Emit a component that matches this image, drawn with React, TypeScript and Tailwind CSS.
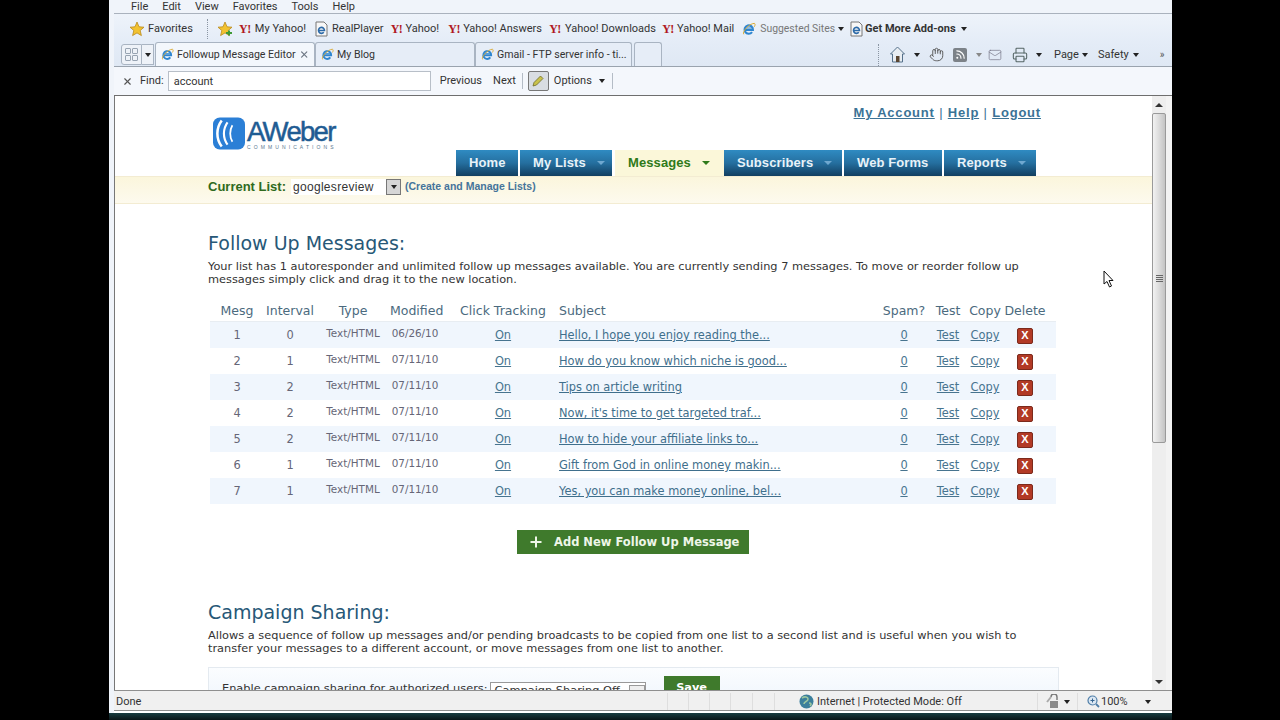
import React from "react";
import { Hand, Mail, Printer, Rss, X } from "lucide-react";

const rowGrid = "grid grid-cols-[54px_52px_74px_50px_119px_321px_48px_40px_34px_46px_8px] items-center";

const messages = [
  { n: 1, interval: 0, date: "06/26/10", subject: "Hello, I hope you enjoy reading the..." },
  { n: 2, interval: 1, date: "07/11/10", subject: "How do you know which niche is good..." },
  { n: 3, interval: 2, date: "07/11/10", subject: "Tips on article writing" },
  { n: 4, interval: 2, date: "07/11/10", subject: "Now, it's time to get targeted traf..." },
  { n: 5, interval: 2, date: "07/11/10", subject: "How to hide your affiliate links to..." },
  { n: 6, interval: 1, date: "07/11/10", subject: "Gift from God in online money makin..." },
  { n: 7, interval: 1, date: "07/11/10", subject: "Yes, you can make money online, bel..." },
];

function Caret({ className = "border-t-[#222]" }: { className?: string }) {
  return <span className={"inline-block h-0 w-0 border-x-[3px] border-t-[4px] border-x-transparent " + className} />;
}

function IeIcon({ size = 14 }: { size?: number }) {
  return (
    <svg width={size} height={size} viewBox="0 0 16 16" className="shrink-0">
      <path d="M3.5 9 H12.5 A4.8 4.8 0 1 0 11.5 11.6" fill="none" stroke="#2f86d0" strokeWidth="2.4" />
      <path d="M5 6.8 H11" stroke="#2f86d0" strokeWidth="1" />
      <path d="M2 14 C0 11 8 2 14 1.5 C15.5 2 15 4 14 5.5" fill="none" stroke="#d9a92e" strokeWidth="1.1" />
    </svg>
  );
}

function PageIcon() {
  return (
    <svg width="13" height="16" viewBox="0 0 13 16" className="shrink-0">
      <path d="M1 1 H9 L12 4 V15 H1 Z" fill="#f7f7f7" stroke="#777" strokeWidth="1" />
      <path d="M3.5 9.5 H9.5 A3 3 0 1 0 8.8 11.3" fill="none" stroke="#2c6aa8" strokeWidth="1.6" />
    </svg>
  );
}

function StarIcon({ plus }: { plus?: boolean }) {
  return (
    <svg width="16" height="16" viewBox="0 0 16 16" className="shrink-0">
      <path d="M8 1 L10 5.8 L15 6.2 L11.2 9.5 L12.4 14.6 L8 11.9 L3.6 14.6 L4.8 9.5 L1 6.2 L6 5.8 Z" fill="#f2c230" stroke="#b98a1e" strokeWidth="0.8" />
      {plus && <path d="M9 12 H15 M12 9.5 V14.5" stroke="#3f9a35" strokeWidth="2" />}
    </svg>
  );
}

function YahooMark() {
  return <span className="inline-block w-[14px] text-center font-['Liberation_Serif',serif] text-[12px] font-bold leading-none tracking-[-0.5px] text-[#b01822]">Y!</span>;
}

function HomeIcon() {
  return (
    <svg width="15" height="17" viewBox="0 0 15 17">
      <path d="M7.5 1 L14.5 8 H12.5 V16 H2.5 V8 H0.5 Z" fill="#e8edf2" stroke="#55708a" strokeWidth="1" />
      <rect x="6" y="10" width="3.5" height="6" fill="#5a4632" />
    </svg>
  );
}

function Tab({ active, title, className }: { active?: boolean; title: string; className: string }) {
  return (
    <div className={"flex h-[24px] items-center gap-[3px] rounded-t-[3px] border border-b-0 border-[#a9b4c2] pl-[5px] " + className + (active ? " bg-[#f3f7fc]" : " bg-[#e6edf7]")}>
      <IeIcon size={13} />
      <span className="flex-1 whitespace-nowrap pt-[1px] text-[10.6px] leading-[14px] text-[#333]">{title}</span>
      {active && <X size={11} strokeWidth={2.5} className="mr-[5px] text-[#6a7480]" />}
    </div>
  );
}

function NavTab({ label, menu, active, className }: { label: string; menu?: boolean; active?: boolean; className: string }) {
  return (
    <div
      className={
        "flex h-[26px] items-center gap-[11px] pl-[13px] text-[13px] font-bold tracking-[0.1px] " +
        className +
        (active
          ? " bg-[#fbf7d9] text-[#2f7a1a]"
          : " bg-gradient-to-b from-[#2f8bc2] via-[#256f9f] to-[#123f61] text-[#e8f2f8]")
      }
    >
      <span>{label}</span>
      {menu && (
        <span className={"inline-block h-0 w-0 border-x-[4px] border-t-[4px] border-x-transparent " + (active ? "border-t-[#2f7a1a]" : "border-t-[#6fa8d0]")} />
      )}
    </div>
  );
}

function DeleteBox() {
  return (
    <div className="flex h-[16px] w-[16px] items-center justify-center rounded-[2px] border border-[#7c2a1c] bg-[#b23a26] font-['Liberation_Sans',sans-serif] text-[11px] font-bold leading-none text-white">
      X
    </div>
  );
}

function Toolbars() {
  return (
    <div className="bg-[#edf2f9] text-[11px] leading-[14px] text-[#333]">
      <div className="flex h-[14px] items-start gap-[14px] border-b border-[#aab2bd] bg-[#f0f4fa] pl-[17px]">
        <span>File</span>
        <span>Edit</span>
        <span>View</span>
        <span>Favorites</span>
        <span>Tools</span>
        <span>Help</span>
      </div>

      <div className="flex h-[29px] items-center bg-gradient-to-b from-[#eef3fa] to-[#e4ecf7] pl-[15px]">
        <StarIcon />
        <span className="ml-[3px]">Favorites</span>
        <span className="ml-[14px] h-[20px] border-l border-dotted border-[#8a95a3]" />
        <span className="ml-[9px]"><StarIcon plus /></span>
        <span className="ml-[5px] flex"><YahooMark /></span>
        <span className="ml-[3px]">My Yahoo!</span>
        <span className="ml-[9px]"><PageIcon /></span>
        <span className="ml-[4px]">RealPlayer</span>
        <span className="ml-[6px] flex"><YahooMark /></span>
        <span className="ml-[2px]">Yahoo!</span>
        <span className="ml-[8px] flex"><YahooMark /></span>
        <span className="ml-[2px]">Yahoo! Answers</span>
        <span className="ml-[6px] flex"><YahooMark /></span>
        <span className="ml-[3px]">Yahoo! Downloads</span>
        <span className="ml-[5px] flex"><YahooMark /></span>
        <span className="ml-[2px]">Yahoo! Mail</span>
        <span className="ml-[8px]"><IeIcon /></span>
        <span className="ml-[4px] text-[10.4px] text-[#777]">Suggested Sites</span>
        <span className="ml-[3px] flex"><Caret /></span>
        <span className="ml-[6px]"><PageIcon /></span>
        <span className="ml-[2px] font-bold">Get More Add-ons</span>
        <span className="ml-[5px] flex"><Caret /></span>
      </div>

      <div className="flex h-[24px] items-end border-b border-[#9aa3ae] bg-gradient-to-b from-[#e4ecf7] to-[#dfe8f4] pl-[7px]">
        <div className="mb-[1px] flex h-[21px] w-[21px] items-center justify-center rounded-l-[3px] border border-[#a9b4c2] bg-[#eef2f8]">
          <div className="grid grid-cols-2 gap-[1px]">
            <span className="h-[6px] w-[6px] rounded-[1px] border border-[#98a4b2]" />
            <span className="h-[6px] w-[6px] rounded-[1px] border border-[#98a4b2]" />
            <span className="h-[6px] w-[6px] rounded-[1px] border border-[#98a4b2]" />
            <span className="h-[6px] w-[6px] rounded-[1px] border border-[#98a4b2]" />
          </div>
        </div>
        <div className="mb-[1px] flex h-[21px] w-[12px] items-center justify-center border-y border-r border-[#a9b4c2] bg-[#eef2f8]">
          <Caret />
        </div>
        <Tab active title="Followup Message Editor" className="ml-[1px] w-[160px]" />
        <Tab title="My Blog" className="w-[160px]" />
        <Tab title="Gmail - FTP server info - ti..." className="w-[157px]" />
        <div className="ml-[2px] h-[24px] w-[28px] rounded-t-[3px] border border-b-0 border-[#a9b4c2] bg-[#e6edf7]" />
        <span className="ml-[216px] h-[22px] border-l border-dotted border-[#8a95a3]" />
        <div className="flex h-[23px] items-center text-[#333]">
          <span className="ml-[11px]"><HomeIcon /></span>
          <span className="ml-[9px] flex"><Caret /></span>
          <Hand size={15} strokeWidth={1.5} className="ml-[9px] text-[#555]" />
          <span className="ml-[9px] flex h-[14px] w-[14px] items-center justify-center rounded-[2px] bg-[#7c8288]">
            <Rss size={11} strokeWidth={2.5} className="text-white" />
          </span>
          <span className="ml-[9px] flex"><Caret className="border-t-[#888]" /></span>
          <Mail size={14} strokeWidth={1.2} className="ml-[6px] text-[#778]" />
          <Printer size={16} strokeWidth={1.6} className="ml-[10px] text-[#566]" />
          <span className="ml-[8px] flex"><Caret /></span>
          <span className="ml-[12px]">Page</span>
          <span className="ml-[3px] flex"><Caret /></span>
          <span className="ml-[10px]">Safety</span>
          <span className="ml-[4px] flex"><Caret /></span>
          <span className="ml-[21px] text-[10px] text-[#555]">»</span>
        </div>
      </div>

      <div className="flex h-[28px] items-center bg-[#f4f7fc] pl-[8px]">
        <X size={11} strokeWidth={2.5} className="text-[#555]" />
        <span className="ml-[7px]">Find:</span>
        <div className="ml-[4px] flex h-[20px] w-[263px] items-center border border-[#b8bfc8] bg-white pl-[5px] pt-[1px] text-[11px]">account</div>
        <span className="ml-[9px]">Previous</span>
        <span className="ml-[11px]">Next</span>
        <span className="ml-[6px] h-[16px] border-l border-[#b4bcc6]" />
        <span className="ml-[5px] flex h-[20px] w-[21px] items-center justify-center rounded-[2px] border border-[#777] bg-[#d9dde2]">
          <svg width="14" height="14" viewBox="0 0 14 14">
            <path d="M2 12 L3 8.5 L9.5 2 L12 4.5 L5.5 11 Z" fill="#c9c24a" stroke="#6d6a28" strokeWidth="0.8" />
          </svg>
        </span>
        <span className="ml-[5px]">Options</span>
        <span className="ml-[7px] flex"><Caret /></span>
        <span className="ml-[7px] h-[16px] border-l border-[#b4bcc6]" />
      </div>
    </div>
  );
}

function Logo() {
  return (
    <div className="flex items-start">
      <svg width="32" height="33" viewBox="0 0 33 33" className="shrink-0">
        <rect x="0" y="0" width="33" height="33" rx="7" fill="#2b7fd6" />
        <path d="M9 3 C3 11 3 22 9 30" fill="none" stroke="#fff" strokeWidth="2.6" />
        <path d="M15 5 C10 12 10 21 15 28" fill="none" stroke="#fff" strokeWidth="2.2" />
        <path d="M20 8 C17 13 17 20 20 25" fill="none" stroke="#fff" strokeWidth="1.8" />
      </svg>
      <div className="ml-[2px] mt-[2px] font-['Liberation_Sans',sans-serif]">
        <div className="text-[27.5px] font-normal leading-[25px] tracking-[-1.7px] text-[#1f5c93] [-webkit-text-stroke:0.5px_#1f5c93]">AWeber</div>
        <div className="text-[5px] leading-[6px] tracking-[3.1px] text-[#5a7890]">COMMUNICATIONS</div>
      </div>
    </div>
  );
}

function Page() {
  return (
    <div className="flex h-[594px] min-w-0 flex-1 flex-col overflow-hidden bg-white font-['DejaVu_Sans',sans-serif]">
      <div className="flex h-[80px] shrink-0 pl-[98px] font-['Liberation_Sans',sans-serif]">
        <div className="mt-[21px] w-[124px]"><Logo /></div>
        <div className="ml-[119px] flex w-[585px] flex-col justify-between">
          <div className="mt-[9px] self-end text-[13px] font-bold leading-[16px] tracking-[0.8px] text-[#3b7396]">
            <span className="underline">My Account</span>
            <span className="font-normal"> | </span>
            <span className="underline">Help</span>
            <span className="font-normal"> | </span>
            <span className="underline">Logout</span>
          </div>
          <div className="flex">
            <NavTab label="Home" className="w-[62px]" />
            <NavTab label="My Lists" menu className="ml-[2px] w-[92px]" />
            <NavTab label="Messages" menu active className="ml-[3px] w-[109px]" />
            <NavTab label="Subscribers" menu className="w-[118px]" />
            <NavTab label="Web Forms" className="ml-[2px] w-[98px]" />
            <NavTab label="Reports" menu className="ml-[2px] w-[92px]" />
          </div>
        </div>
      </div>

      <div className="flex h-[28px] shrink-0 items-center border-y border-[#f3ecd2] bg-gradient-to-b from-[#fbf6dc] to-[#fdfaee] pb-[6px] pl-[93px] font-['Liberation_Sans',sans-serif]">
        <span className="text-[13px] font-bold text-[#2f6a1c]">Current List:</span>
        <div className="ml-[5px] flex h-[16px] w-[110px] items-center justify-between bg-white pl-[2px] text-[12px] tracking-[0.3px] text-[#333]">
          googlesreview
          <span className="flex h-[16px] w-[15px] items-center justify-center border border-[#777] bg-[#d6d6d6]">
            <Caret />
          </span>
        </div>
        <span className="ml-[4px] text-[10.5px] font-bold text-[#45749a]">(Create and Manage Lists)</span>
      </div>

      <div className="pl-[93px] pr-[92px]">
        <h1 className="mt-[27px] text-[19px] leading-[24px] text-[#275877]">Follow Up Messages:</h1>
        <p className="mt-[5px] w-[830px] text-[11.35px] leading-[13px] text-[#333]">
          Your list has 1 autoresponder and unlimited follow up messages available. You are currently sending 7 messages. To move or reorder follow up messages simply click and drag it to the new location.
        </p>
      </div>

      <div className="ml-[95px] mt-[15px] w-[846px]">
        <div className={rowGrid + " h-[21px] border-b border-[#e8edf2] text-center text-[12.5px] leading-none text-[#4b6a7e]"}>
          <span>Mesg</span>
          <span>Interval</span>
          <span>Type</span>
          <span>Modified</span>
          <span className="pl-[7px]">Click Tracking</span>
          <span className="text-left">Subject</span>
          <span>Spam?</span>
          <span>Test</span>
          <span>Copy</span>
          <span>Delete</span>
          <span />
        </div>
        {messages.map((m) => (
          <div key={m.n} className={rowGrid + " h-[26px] text-center text-[11.4px] leading-[14px] text-[#667] " + (m.n % 2 === 1 ? "bg-[#f0f6fd]" : "bg-white")}>
            <span>{m.n}</span>
            <span>{m.interval}</span>
            <span className="mb-[4px] whitespace-nowrap text-[10.4px]">Text/HTML</span>
            <span className="mb-[4px] text-[10.4px]">{m.date}</span>
            <span className="pl-[7px] text-[#47748f] underline">On</span>
            <span className="whitespace-nowrap text-left text-[#3f6f8c] underline">{m.subject}</span>
            <span className="text-[#47748f] underline">0</span>
            <span className="text-[#47748f] underline">Test</span>
            <span className="text-[#47748f] underline">Copy</span>
            <span className="flex justify-center pt-[1px]"><DeleteBox /></span>
            <span />
          </div>
        ))}
      </div>

      <div className="ml-[402px] mt-[26px] flex h-[24px] w-[232px] shrink-0 items-center bg-[#3f7a2c] text-[11.5px] font-bold leading-none text-[#eef6e8]">
        <svg width="12" height="12" viewBox="0 0 12 12" className="ml-[13px]">
          <path d="M6 0.5 V11.5 M0.5 6 H11.5" stroke="#eef6e8" strokeWidth="2" />
        </svg>
        <span className="ml-[12px] whitespace-nowrap pt-[2px]">Add New Follow Up Message</span>
      </div>

      <div className="pl-[93px]">
        <h2 className="mt-[46px] text-[19px] leading-[24px] text-[#275877]">Campaign Sharing:</h2>
        <p className="mt-[5px] w-[830px] text-[11.35px] leading-[13px] text-[#333]">
          Allows a sequence of follow up messages and/or pending broadcasts to be copied from one list to a second list and is useful when you wish to transfer your messages to a different account, or move messages from one list to another.
        </p>
      </div>

      <div className="ml-[93px] mt-[12px] flex h-[40px] w-[851px] shrink-0 items-start border border-[#e4eaf0] bg-gradient-to-b from-[#fbfdff] to-[#eef5fc] pl-[13px] text-[11.35px] leading-none text-[#333]">
        <span className="mt-[15px]">Enable campaign sharing for authorized users:</span>
        <div className="ml-[2px] mt-[14px] flex h-[20px] w-[156px] items-start justify-between border border-[#999] bg-white pl-[4px] pt-[2px]">
          <span className="whitespace-nowrap">Campaign Sharing Off</span>
          <span className="h-[18px] w-[16px] shrink-0 border border-[#999] bg-[#eee]" />
        </div>
        <div className="ml-[18px] mt-[8px] flex h-[24px] w-[56px] items-center justify-center bg-[#3f7a2c] font-bold text-white">Save</div>
      </div>
    </div>
  );
}

function Scrollbar() {
  return (
    <div className="flex h-[594px] w-[14px] shrink-0 flex-col bg-[#eeeeee]">
      <div className="flex h-[17px] items-center justify-center">
        <span className="inline-block h-0 w-0 border-x-[4px] border-b-[4px] border-x-transparent border-b-[#333]" />
      </div>
      <div className="flex h-[330px] items-center justify-center rounded-[2px] border border-[#9a9a9a] bg-gradient-to-r from-[#f2f2f2] via-[#dcdcdc] to-[#c4c4c4]">
        <div className="flex flex-col gap-[1px]">
          <span className="h-[1px] w-[7px] bg-[#666]" />
          <span className="h-[1px] w-[7px] bg-[#666]" />
          <span className="h-[1px] w-[7px] bg-[#666]" />
          <span className="h-[1px] w-[7px] bg-[#666]" />
        </div>
      </div>
      <div className="flex-1" />
      <div className="flex h-[17px] items-center justify-center">
        <span className="inline-block h-0 w-0 border-x-[4px] border-t-[4px] border-x-transparent border-t-[#333]" />
      </div>
    </div>
  );
}

function StatusBar() {
  return (
    <div className="flex h-[21px] items-center border-y border-[#8f8f8f] bg-[#f0f0f0] pl-[2px] pt-[2px] text-[11px] leading-none text-[#333]">
      <span className="w-[551px]">Done</span>
      <span className="h-full w-[21px] border-l border-[#dedede]" />
      <span className="h-full w-[21px] border-l border-[#dedede]" />
      <span className="h-full w-[21px] border-l border-[#dedede]" />
      <span className="h-full w-[22px] border-l border-[#dedede]" />
      <span className="h-full w-[22px] border-l border-[#dedede]" />
      <span className="flex h-full w-[263px] items-center border-l border-[#dedede] pl-[25px]">
        <svg width="15" height="15" viewBox="0 0 15 15" className="-ml-[1px] mr-[3px] shrink-0">
          <circle cx="7.5" cy="7.5" r="7" fill="#3c7f9c" />
          <path d="M3 4 C6 2 9 3 9 5 C9 8 5 7 5 10 M10 9 C12 9 13 10 11 12" fill="none" stroke="#9cc7a0" strokeWidth="1.6" />
        </svg>
        Internet | Protected Mode: Off
      </span>
      <span className="flex h-full w-[40px] items-center border-l border-[#dedede] pl-[8px]">
        <svg width="14" height="15" viewBox="0 0 14 15" className="shrink-0">
          <path d="M5 3 A3 3 0 0 1 11 3 V6" fill="none" stroke="#777" strokeWidth="1.4" />
          <rect x="4" y="7" width="8" height="7" fill="#8a8a8a" />
          <path d="M1 8 L5 3" stroke="#aaa" strokeWidth="2" />
        </svg>
        <span className="ml-[4px] flex"><Caret /></span>
      </span>
      <span className="flex h-full flex-1 items-center border-l border-[#dedede] pl-[9px]">
        <svg width="13" height="13" viewBox="0 0 13 13" className="shrink-0">
          <circle cx="5.5" cy="5.5" r="4.5" fill="#dbe7f3" stroke="#4f7ea8" strokeWidth="1.2" />
          <path d="M3.5 5.5 H7.5 M5.5 3.5 V7.5" stroke="#35648f" strokeWidth="1" />
          <path d="M9 9 L12 12" stroke="#4f7ea8" strokeWidth="1.8" />
        </svg>
        <span className="ml-[1px]">100%</span>
        <span className="ml-[17px] flex"><Caret /></span>
      </span>
    </div>
  );
}

export default function App() {
  return (
    <div className="relative flex h-[720px] w-[1280px] overflow-hidden bg-black font-['Roboto',sans-serif]">
      <div className="ml-[109px] flex h-[720px] w-[1063px] shrink-0 flex-col">
        <div className="flex h-[713px] shrink-0 flex-col bg-[#f0f4fa] pl-[5px]">
          <Toolbars />
          <div className="h-[1px] shrink-0 bg-[#6e6e6e]" />
          <div className="flex">
            <div className="w-[1px] shrink-0 bg-[#777]" />
            <Page />
            <Scrollbar />
            <div className="w-[6px] shrink-0 bg-[#f3f3f3]" />
          </div>
          <StatusBar />
          <div className="h-[2px] bg-white" />
        </div>
        <div className="h-[7px] bg-gradient-to-b from-[#173c40] to-[#0a1618]" />
      </div>

      {/* mouse pointer sitting over the page */}
      <svg width="12" height="18" viewBox="0 0 12 18" className="absolute left-[1103px] top-[270px]">
        <path d="M1 1 V14 L4 11.5 L6.5 17 L8.5 16 L6 10.5 H10 Z" fill="#fff" stroke="#111" strokeWidth="1" />
      </svg>
    </div>
  );
}
